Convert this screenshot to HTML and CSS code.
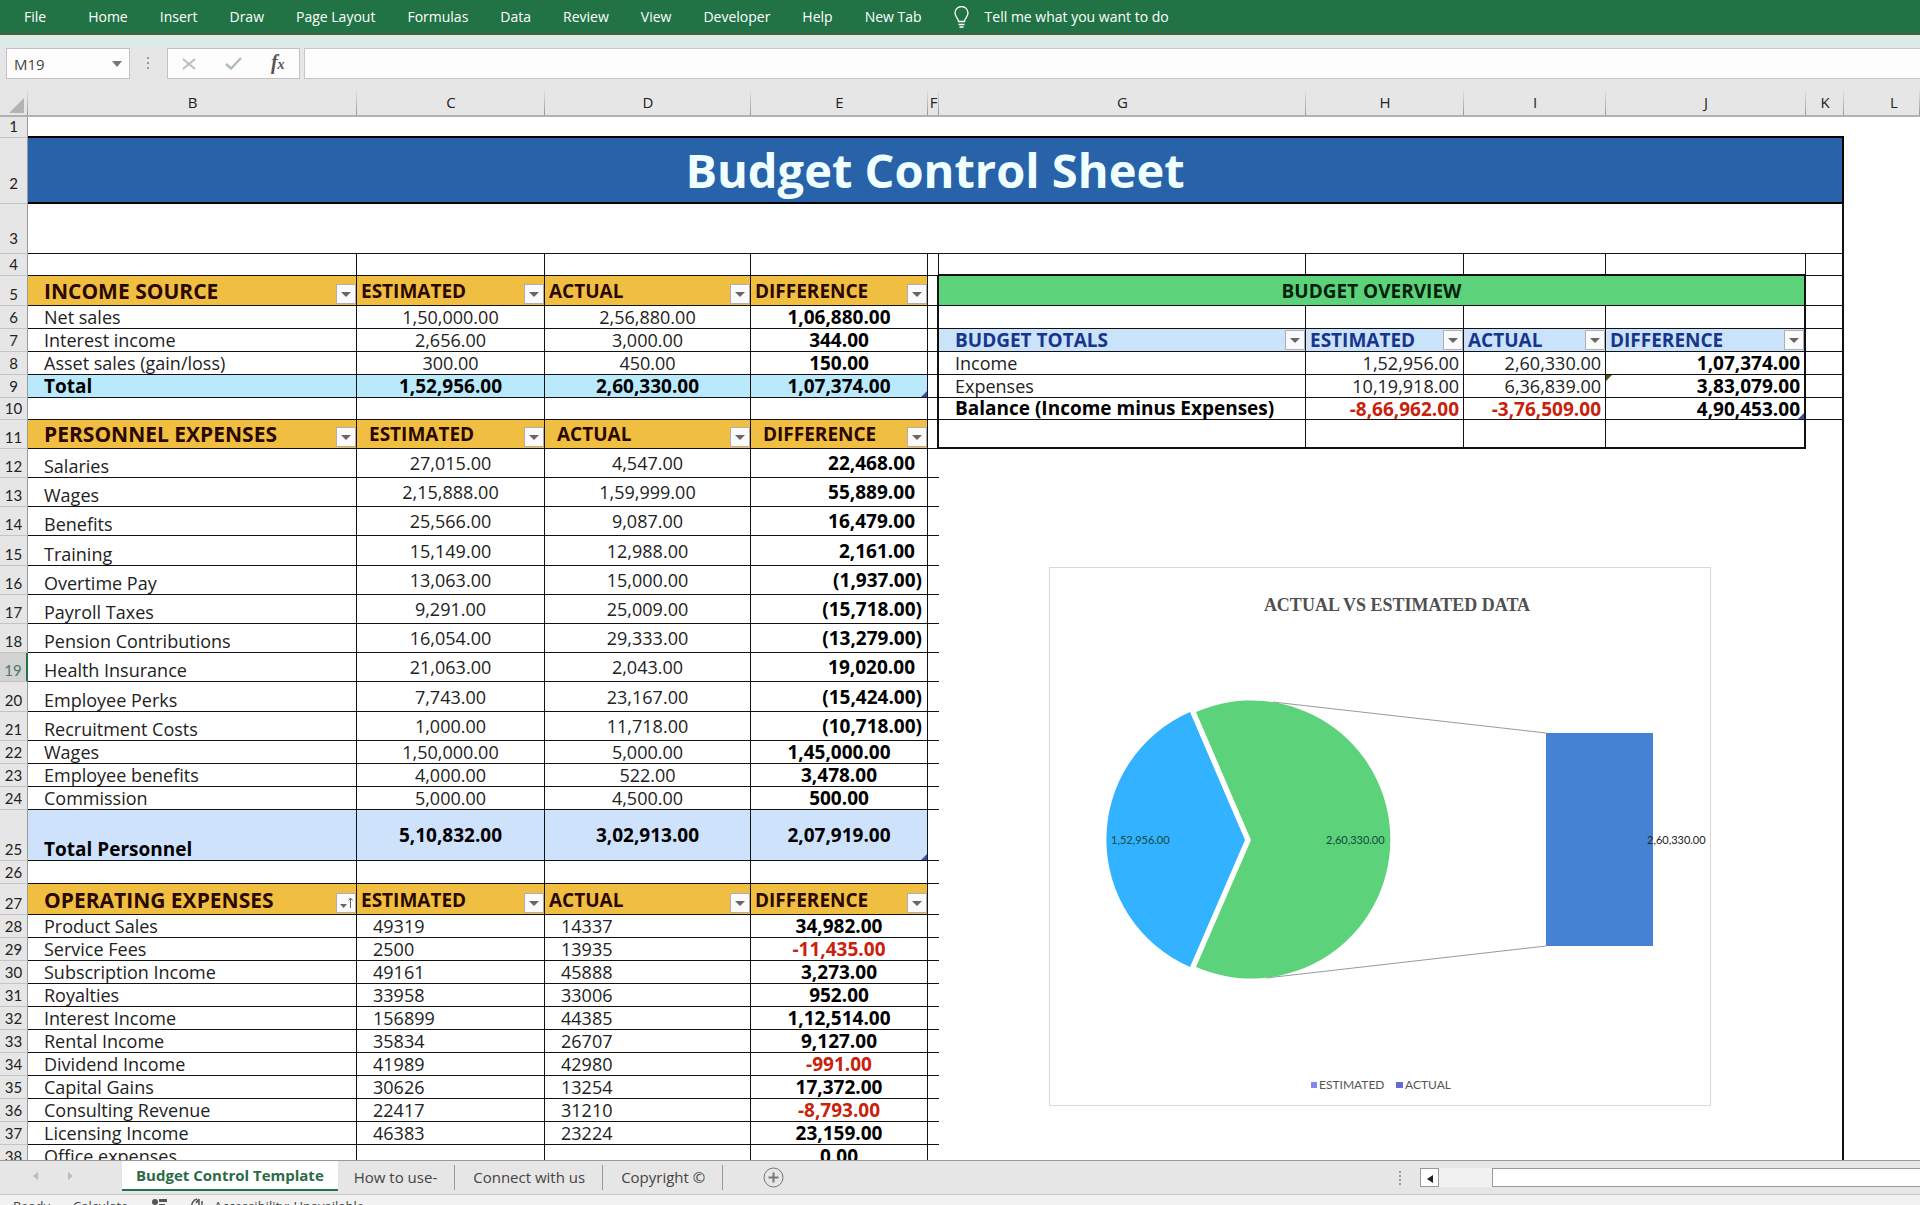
FILE: index.html
```html
<!DOCTYPE html>
<html lang="en">
<head>
<meta charset="utf-8">
<title>Budget Control Sheet</title>
<link rel="stylesheet" href="styles.css">
</head>
<body>
<svg class="defs" aria-hidden="true">
  <symbol id="caret" viewBox="0 0 18 18"><path d="M4 7h10l-5 5z" fill="#666"/></symbol>
  <symbol id="sorted" viewBox="0 0 18 18"><path d="M3 10h7l-3.500 4z" fill="#666"/><path d="M13.500 14V4M11.500 6.500l2-2.500 2 2.500" fill="none" stroke="#666"/></symbol>
</svg>
<nav class="ribbon">
  <button class="ribbon-file">File</button>
  <button>Home</button>
  <button>Insert</button>
  <button>Draw</button>
  <button>Page Layout</button>
  <button>Formulas</button>
  <button>Data</button>
  <button>Review</button>
  <button>View</button>
  <button>Developer</button>
  <button>Help</button>
  <button>New Tab</button>
  <button class="tell"><svg width="15" height="22" viewBox="0 0 15 22" fill="none" stroke="#fff" stroke-width="1.300"><path d="M4.500 15.500c0-3-3.500-4.500-3.500-8.500a6.500 6.500 0 0 1 13 0c0 4-3.500 5.500-3.500 8.500zM4.500 18.500h6M5.500 21h4"/></svg>Tell me what you want to do</button>
</nav>
<div class="formula-bar">
  <div class="name-box">
    <input type="text" value="M19" aria-label="Name box">
    <svg width="10" height="6" viewBox="0 0 10 6"><path d="M0 0h10L5 6z" fill="#777"/></svg>
  </div>
  <svg class="grip" width="3" height="14" viewBox="0 0 3 14" fill="#999"><path d="M0 0h2v2H0zM0 5h2v2H0zM0 10h2v2H0z"/></svg>
  <div class="entry-tools">
    <button aria-label="Cancel"><svg width="14" height="12" viewBox="0 0 14 12"><path d="M1 1l12 10M13 1L1 11" stroke="#bbb" stroke-width="2"/></svg></button>
    <button aria-label="Enter"><svg width="17" height="13" viewBox="0 0 17 13"><path d="M1 7l5 4.500L16 1" fill="none" stroke="#b5bdb8" stroke-width="2.500"/></svg></button>
    <button class="fx" aria-label="Insert function"><i>f</i><small>x</small></button>
  </div>
  <input class="formula" type="text" aria-label="Formula bar">
</div>

<main class="sheet">
<table class="grid">
<colgroup><col class="c-n"><col class="c-b"><col class="c-c"><col class="c-d"><col class="c-e"><col class="c-f"><col class="c-g"><col class="c-h"><col class="c-i"><col class="c-j"><col class="c-k"><col></colgroup>
<thead>
<tr><th class="corner"><svg width="15" height="15" viewBox="0 0 15 15"><path d="M15 0v15H0z" fill="#b3b3b3"/></svg></th><th>B</th><th>C</th><th>D</th><th>E</th><th>F</th><th>G</th><th>H</th><th>I</th><th>J</th><th>K</th><th class="col-l">L</th></tr>
</thead>
<tbody>
<tr class="h21"><th>1</th><td colspan="10" class="above-title"></td><td class="off" rowspan="38"></td></tr>
<tr class="h66"><th>2</th><td colspan="10" class="title">Budget Control Sheet</td></tr>
<tr class="h50"><th>3</th><td colspan="10" class="line edge"></td></tr>
<tr class="h22"><th>4</th><td class="cell"></td><td class="cell"></td><td class="cell"></td><td class="cell"></td><td class="cell"></td><td class="cell thick-b"></td><td class="cell thick-b"></td><td class="cell thick-b"></td><td class="cell thick-b"></td><td class="line edge"></td></tr>
<tr class="h30 head"><th>5</th><td class="cell big">INCOME SOURCE<button aria-label="Filter"><svg><use href="#caret"/></svg></button></td><td class="cell">ESTIMATED<button aria-label="Filter"><svg><use href="#caret"/></svg></button></td><td class="cell">ACTUAL<button aria-label="Filter"><svg><use href="#caret"/></svg></button></td><td class="cell">DIFFERENCE<button aria-label="Filter"><svg><use href="#caret"/></svg></button></td><td class="gap thick-r"></td><td colspan="4" class="overview">BUDGET OVERVIEW</td><td class="line edge"></td></tr>
<tr class="h23"><th>6</th><td class="cell label">Net sales</td><td class="cell num">1,50,000.00</td><td class="cell num">2,56,880.00</td><td class="cell num b">1,06,880.00</td><td class="gap thick-r"></td><td class="cell"></td><td class="cell"></td><td class="cell"></td><td class="cell thick-r"></td><td class="line edge"></td></tr>
<tr class="h23"><th>7</th><td class="cell label">Interest income</td><td class="cell num">2,656.00</td><td class="cell num">3,000.00</td><td class="cell num b">344.00</td><td class="gap thick-r"></td><td class="cell totals first">BUDGET TOTALS<button aria-label="Filter"><svg><use href="#caret"/></svg></button></td><td class="cell totals">ESTIMATED<button aria-label="Filter"><svg><use href="#caret"/></svg></button></td><td class="cell totals">ACTUAL<button aria-label="Filter"><svg><use href="#caret"/></svg></button></td><td class="cell totals thick-r">DIFFERENCE<button aria-label="Filter"><svg><use href="#caret"/></svg></button></td><td class="line edge"></td></tr>
<tr class="h23"><th>8</th><td class="cell label">Asset sales (gain/loss)</td><td class="cell num">300.00</td><td class="cell num">450.00</td><td class="cell num b">150.00</td><td class="gap thick-r"></td><td class="cell label">Income</td><td class="cell right">1,52,956.00</td><td class="cell right">2,60,330.00</td><td class="cell right b thick-r">1,07,374.00</td><td class="line edge"></td></tr>
<tr class="h23"><th>9</th><td class="cell label b sum">Total</td><td class="cell num b sum">1,52,956.00</td><td class="cell num b sum">2,60,330.00</td><td class="cell num b sum table-end">1,07,374.00</td><td class="gap thick-r"></td><td class="cell label">Expenses</td><td class="cell right">10,19,918.00</td><td class="cell right">6,36,839.00</td><td class="cell right b thick-r flagged">3,83,079.00</td><td class="line edge"></td></tr>
<tr class="h22"><th>10</th><td class="cell"></td><td class="cell"></td><td class="cell"></td><td class="cell"></td><td class="gap thick-r"></td><td class="cell label b">Balance (Income minus Expenses)</td><td class="cell right b neg">-8,66,962.00</td><td class="cell right b neg">-3,76,509.00</td><td class="cell right b thick-r table-end">4,90,453.00</td><td class="line edge"></td></tr>
<tr class="h29 head indent"><th>11</th><td class="cell big">PERSONNEL EXPENSES<button aria-label="Filter"><svg><use href="#caret"/></svg></button></td><td class="cell">ESTIMATED<button aria-label="Filter"><svg><use href="#caret"/></svg></button></td><td class="cell">ACTUAL<button aria-label="Filter"><svg><use href="#caret"/></svg></button></td><td class="cell">DIFFERENCE<button aria-label="Filter"><svg><use href="#caret"/></svg></button></td><td class="gap thick-r"></td><td class="cell plain thick-b"></td><td class="cell plain thick-b"></td><td class="cell plain thick-b"></td><td class="cell plain thick-b thick-r"></td><td class="edge"></td></tr>
<tr class="h29"><th>12</th><td class="cell label">Salaries</td><td class="cell num">27,015.00</td><td class="cell num">4,547.00</td><td class="cell acct b">22,468.00</td><td class="gap"></td>
<td colspan="4" rowspan="27" class="canvas">
<figure class="chart">
<svg viewBox="0 0 660 537" role="img" aria-label="Actual vs estimated data">
  <text class="chart-title" x="347" y="43" text-anchor="middle">ACTUAL VS ESTIMATED DATA</text>
  <path d="M223 134L496 165M216 410L496 378" stroke="#999" fill="none"/>
  <path d="M195 272L140 144A139 139 0 0 0 140 399Z" fill="#33b2ff"/>
  <path d="M201 272L146 144A139 139 0 1 1 146 399Z" fill="#5cd27a"/>
  <rect x="496" y="165" width="107" height="213" fill="#4682d3"/>
  <text class="value" x="61" y="276">1,52,956.00</text>
  <text class="value" x="276" y="276">2,60,330.00</text>
  <text class="value dark" x="597" y="276">2,60,330.00</text>
  <rect x="261" y="514" width="6" height="6" fill="#8088f8"/><text class="legend" x="269" y="521">ESTIMATED</text>
  <rect x="346" y="514" width="7" height="6" fill="#646bd6"/><text class="legend" x="355" y="521">ACTUAL</text>
</svg>
</figure>
</td><td rowspan="27" class="edge"></td></tr>
<tr class="h29"><th>13</th><td class="cell label">Wages</td><td class="cell num">2,15,888.00</td><td class="cell num">1,59,999.00</td><td class="cell acct b">55,889.00</td><td class="gap"></td></tr>
<tr class="h29"><th>14</th><td class="cell label">Benefits</td><td class="cell num">25,566.00</td><td class="cell num">9,087.00</td><td class="cell acct b">16,479.00</td><td class="gap"></td></tr>
<tr class="h30"><th>15</th><td class="cell label">Training</td><td class="cell num">15,149.00</td><td class="cell num">12,988.00</td><td class="cell acct b">2,161.00</td><td class="gap"></td></tr>
<tr class="h29"><th>16</th><td class="cell label">Overtime Pay</td><td class="cell num">13,063.00</td><td class="cell num">15,000.00</td><td class="cell acct paren b">(1,937.00)</td><td class="gap"></td></tr>
<tr class="h29"><th>17</th><td class="cell label">Payroll Taxes</td><td class="cell num">9,291.00</td><td class="cell num">25,009.00</td><td class="cell acct paren b">(15,718.00)</td><td class="gap"></td></tr>
<tr class="h29"><th>18</th><td class="cell label">Pension Contributions</td><td class="cell num">16,054.00</td><td class="cell num">29,333.00</td><td class="cell acct paren b">(13,279.00)</td><td class="gap"></td></tr>
<tr class="h29"><th class="active-row">19</th><td class="cell label">Health Insurance</td><td class="cell num">21,063.00</td><td class="cell num">2,043.00</td><td class="cell acct b">19,020.00</td><td class="gap"></td></tr>
<tr class="h30"><th>20</th><td class="cell label">Employee Perks</td><td class="cell num">7,743.00</td><td class="cell num">23,167.00</td><td class="cell acct paren b">(15,424.00)</td><td class="gap"></td></tr>
<tr class="h29"><th>21</th><td class="cell label">Recruitment Costs</td><td class="cell num">1,000.00</td><td class="cell num">11,718.00</td><td class="cell acct paren b">(10,718.00)</td><td class="gap"></td></tr>
<tr class="h23"><th>22</th><td class="cell label">Wages</td><td class="cell num">1,50,000.00</td><td class="cell num">5,000.00</td><td class="cell num b">1,45,000.00</td><td class="gap"></td></tr>
<tr class="h23"><th>23</th><td class="cell label">Employee benefits</td><td class="cell num">4,000.00</td><td class="cell num">522.00</td><td class="cell num b">3,478.00</td><td class="gap"></td></tr>
<tr class="h23"><th>24</th><td class="cell label">Commission</td><td class="cell num">5,000.00</td><td class="cell num">4,500.00</td><td class="cell num b">500.00</td><td class="gap"></td></tr>
<tr class="h51"><th>25</th><td class="cell label b subtotal">Total Personnel</td><td class="cell num b subtotal">5,10,832.00</td><td class="cell num b subtotal">3,02,913.00</td><td class="cell num b subtotal table-end">2,07,919.00</td><td class="gap"></td></tr>
<tr class="h23"><th>26</th><td class="cell"></td><td class="cell"></td><td class="cell"></td><td class="cell"></td><td class="gap"></td></tr>
<tr class="h31 head"><th>27</th><td class="cell big">OPERATING EXPENSES<button aria-label="Sorted filter"><svg><use href="#sorted"/></svg></button></td><td class="cell">ESTIMATED<button aria-label="Filter"><svg><use href="#caret"/></svg></button></td><td class="cell">ACTUAL<button aria-label="Filter"><svg><use href="#caret"/></svg></button></td><td class="cell">DIFFERENCE<button aria-label="Filter"><svg><use href="#caret"/></svg></button></td><td class="gap"></td></tr>
<tr class="h23"><th>28</th><td class="cell label">Product Sales</td><td class="cell label">49319</td><td class="cell label">14337</td><td class="cell num b">34,982.00</td><td class="gap"></td></tr>
<tr class="h23"><th>29</th><td class="cell label">Service Fees</td><td class="cell label">2500</td><td class="cell label">13935</td><td class="cell num b neg">-11,435.00</td><td class="gap"></td></tr>
<tr class="h23"><th>30</th><td class="cell label">Subscription Income</td><td class="cell label">49161</td><td class="cell label">45888</td><td class="cell num b">3,273.00</td><td class="gap"></td></tr>
<tr class="h23"><th>31</th><td class="cell label">Royalties</td><td class="cell label">33958</td><td class="cell label">33006</td><td class="cell num b">952.00</td><td class="gap"></td></tr>
<tr class="h23"><th>32</th><td class="cell label">Interest Income</td><td class="cell label">156899</td><td class="cell label">44385</td><td class="cell num b">1,12,514.00</td><td class="gap"></td></tr>
<tr class="h23"><th>33</th><td class="cell label">Rental Income</td><td class="cell label">35834</td><td class="cell label">26707</td><td class="cell num b">9,127.00</td><td class="gap"></td></tr>
<tr class="h23"><th>34</th><td class="cell label">Dividend Income</td><td class="cell label">41989</td><td class="cell label">42980</td><td class="cell num b neg">-991.00</td><td class="gap"></td></tr>
<tr class="h23"><th>35</th><td class="cell label">Capital Gains</td><td class="cell label">30626</td><td class="cell label">13254</td><td class="cell num b">17,372.00</td><td class="gap"></td></tr>
<tr class="h23"><th>36</th><td class="cell label">Consulting Revenue</td><td class="cell label">22417</td><td class="cell label">31210</td><td class="cell num b neg">-8,793.00</td><td class="gap"></td></tr>
<tr class="h23"><th>37</th><td class="cell label">Licensing Income</td><td class="cell label">46383</td><td class="cell label">23224</td><td class="cell num b">23,159.00</td><td class="gap"></td></tr>
<tr class="h23"><th>38</th><td class="cell label">Office expenses</td><td class="cell label"></td><td class="cell label"></td><td class="cell num b">0.00</td><td class="gap"></td></tr>
</tbody>
</table>
</main>

<footer class="tab-bar">
  <div class="tab-nav">
    <button aria-label="Previous sheet"><svg width="5" height="8" viewBox="0 0 5 8"><path d="M5 0v8L0 4z" fill="#bbb"/></svg></button>
    <button aria-label="Next sheet"><svg width="5" height="8" viewBox="0 0 5 8"><path d="M0 0v8l5-4z" fill="#bbb"/></svg></button>
  </div>
  <button class="tab active">Budget Control Template</button>
  <button class="tab">How to use-</button>
  <button class="tab">Connect with us</button>
  <button class="tab">Copyright ©</button>
  <button class="add" aria-label="New sheet"><svg width="21" height="21" viewBox="0 0 21 21" fill="none" stroke="#777"><circle cx="10.500" cy="10.500" r="9.500"/><path d="M10.500 5.500v10M5.500 10.500h10" stroke-width="2"/></svg></button>
  <svg class="split" width="3" height="14" viewBox="0 0 3 14" fill="#999"><path d="M0 0h2v2H0zM0 4h2v2H0zM0 8h2v2H0zM0 12h2v2H0z"/></svg>
  <div class="scroll">
    <button aria-label="Scroll left"><svg width="6" height="8" viewBox="0 0 6 8"><path d="M6 0v8L0 4z" fill="#222"/></svg></button>
    <div class="thumb"></div>
  </div>
</footer>
<div class="status">
  <span class="ready">Ready</span><span class="calc">Calculate</span>
  <svg class="macro" width="17" height="14" viewBox="0 0 17 14" fill="#555"><circle cx="4" cy="4" r="3"/><path d="M8 1h8v3H8zM8 6h6v2H8zM1 8h6v6H1z"/></svg>
  <svg class="a11y" width="16" height="16" viewBox="0 0 16 16" fill="none" stroke="#555" stroke-width="1.500"><path d="M7 1C3 2 1 6 2 10M9 1v8M6 5l3-4M12 3v6"/></svg>
  <span>Accessibility: Unavailable</span>
</div>
</body>
</html>
```
FILE: styles.css
```css
* { box-sizing: border-box; }

body {
  margin: 0;
  height: 100vh;
  display: flex;
  flex-direction: column;
  overflow: hidden;
  background: #fff;
  color: #222;
  font-family: "Open Sans", "Noto Sans", sans-serif;
}

button {
  border: 0;
  padding: 0;
  background: none;
  color: inherit;
  font: inherit;
}

.defs { position: absolute; width: 0; height: 0; }

/* Ribbon */
.ribbon {
  flex: none;
  display: flex;
  height: 35px;
  padding-left: 8px;
  background: #217346;
  border-bottom: 2px solid #4f5f44;
  color: #fff;
  font-size: 14px;
  white-space: nowrap;
}
.ribbon button { padding: 0 16px; }
.ribbon .ribbon-file { padding-right: 26px; }
.ribbon .tell { display: flex; align-items: center; gap: 16px; padding-left: 16px; }

/* Formula bar */
.formula-bar {
  flex: none;
  display: flex;
  align-items: stretch;
  height: 44px;
  padding: 13px 0 0 6px;
  background: linear-gradient(#dcebe5 12px, #e6e6e6 12px);
}
.name-box {
  display: flex;
  align-items: center;
  width: 124px;
  height: 31px;
  padding: 0 7px;
  background: #fdfdfd;
  border: 1px solid #c6c0c2;
}
.name-box input {
  flex: 1;
  min-width: 0;
  border: 0;
  padding: 0;
  background: none;
  color: #444;
  font: inherit;
  font-size: 15px;
}
.grip { margin: 9px 17px 0 17px; }
.entry-tools {
  display: flex;
  align-items: center;
  justify-content: space-around;
  width: 133px;
  height: 31px;
  margin-right: 4px;
  background: #fdfdfd;
  border: 1px solid #c6c0c2;
}
.fx { color: #555; font-family: "Liberation Serif", serif; font-size: 20px; font-weight: bold; line-height: 20px; }
.fx small { font-size: 14px; font-style: italic; }
.formula {
  flex: 1;
  height: 31px;
  background: #fdfdfd;
  border: 1px solid #c6c6c6;
  border-right: 0;
}

/* Grid */
.sheet { flex: 1; min-height: 0; overflow: hidden; }
.grid {
  width: 100%;
  table-layout: fixed;
  border-collapse: separate;
  border-spacing: 0;
  font-size: 18px;
  line-height: 20px;
  white-space: nowrap;
}
.c-n { width: 28px; }
.c-b { width: 329px; }
.c-c { width: 188px; }
.c-d { width: 206px; }
.c-e { width: 177px; }
.c-f { width: 11px; }
.c-g { width: 367px; }
.c-h { width: 158px; }
.c-i { width: 142px; }
.c-j { width: 200px; }
.c-k { width: 38px; }

.grid td, .grid th { padding: 0; position: relative; }
.grid thead th {
  height: 38px;
  padding-top: 10px;
  background: linear-gradient(#e6e6e6, #999) right bottom / 1px 26px no-repeat #e6e6e6;
  border-bottom: 2px solid #b0b0b0;
  font-size: 15px;
  font-weight: normal;
  line-height: 24px;
}
.grid thead .corner { text-align: right; padding: 16px 4px 0 0; line-height: 0; }
.grid thead .col-l { padding-left: 24px; }
.grid tbody th {
  padding-bottom: 2px;
  background: #e6e6e6;
  border-right: 1px solid #9b9b9b;
  border-bottom: 1px solid #c4c4c4;
  font-family: Lato, sans-serif;
  font-size: 15px;
  font-weight: normal;
  line-height: 18px;
  text-align: center;
  vertical-align: bottom;
}
.grid .h66 th { padding-bottom: 11px; }
.grid .h50 th { padding-bottom: 6px; }
.grid tbody .active-row { background: #d2d2d2; border-right: 2px solid #217346; color: #4f7a62; }

.h21 { height: 21px; }
.h22 { height: 22px; }
.h23 { height: 23px; }
.h29 { height: 29px; }
.h30 { height: 30px; }
.h31 { height: 31px; }
.h50 { height: 50px; }
.h51 { height: 51px; }
.h66 { height: 66px; }

.cell { border-right: 1px solid #111; border-bottom: 1px solid #111; }
.gap, .line { border-bottom: 1px solid #111; }
.edge { border-right: 2px solid #111; }
.grid .thick-r { border-right: 2px solid #111; }
.grid .thick-b { border-bottom: 2px solid #111; }
.above-title { border-bottom: 2px solid #000; }

.title {
  background: #2862a9;
  border-right: 2px solid #000;
  border-bottom: 2px solid #000;
  color: #f0ffff;
  font-size: 47px;
  font-weight: bold;
  line-height: 60px;
  text-align: center;
}

.b { font-size: 19px; font-weight: bold; color: #000; }
.neg { color: #c8210c; }
.grid .label { padding: 0 0 1px 16px; vertical-align: bottom; }
.num { text-align: center; }
.grid .right { padding-right: 4px; text-align: right; }
.grid .acct { padding-right: 12px; text-align: right; }
.grid .paren { padding-right: 5px; }

.head .cell {
  padding: 0 0 4px 4px;
  background: #f0bf42;
  color: #2a0800;
  font-size: 19px;
  font-weight: bold;
  vertical-align: bottom;
}
.head .cell.big { padding-left: 16px; font-size: 21px; }
.indent .cell:not(.big) { padding-left: 12px; }
.head .cell.plain { background: none; }
.head .overview {
  background: #5cd27a;
  border-right: 2px solid #111;
  border-bottom: 1px solid #111;
  color: #04210c;
  font-size: 19px;
  font-weight: bold;
  text-align: center;
}
.grid .totals { padding-left: 4px; background: #cbe2fb; color: #17358a; font-size: 19px; font-weight: bold; }
.grid .first { padding-left: 16px; }
.sum { background: #bae9fb; }
.subtotal { background: #cfe2fb; }

.cell button {
  position: absolute;
  right: 0;
  bottom: 1px;
  width: 20px;
  height: 20px;
  background: #fafafa;
  border: 1px solid #b5adb5;
}
.cell button svg { display: block; width: 18px; height: 18px; }

.table-end::after, .flagged::after {
  content: "";
  position: absolute;
  right: 0;
  bottom: 0;
  border: 3px solid;
  border-color: transparent #3f4fa0 #3f4fa0 transparent;
}
.flagged::after { inset: 0 auto auto 0; border-color: #3f6010 transparent transparent #3f6010; }

/* Chart */
.canvas { vertical-align: top; }
.chart {
  width: 662px;
  margin: 118px 0 0 110px;
  border: 1px solid #d9d9d9;
  background: #fff;
}
.chart svg { display: block; width: 100%; }
.chart-title { fill: #505050; font: bold 18px "Liberation Serif", serif; }
.value { fill: #0d4a40; font: 11px Lato, sans-serif; }
.dark { fill: #222; }
.legend { fill: #555; font: 12px Lato, sans-serif; }

/* Sheet tabs */
.tab-bar {
  flex: none;
  display: flex;
  align-items: flex-start;
  height: 35px;
  background: #e6e6e6;
  border-top: 1px solid #999;
  border-bottom: 1px solid #c6c6c6;
  color: #444;
  font-size: 15px;
  white-space: nowrap;
}
.tab-nav { display: flex; gap: 30px; width: 122px; padding: 3px 0 0 33px; }
.tab { position: relative; height: 32px; padding: 0 18px; }
.tab:not(.active)::after { content: ""; position: absolute; top: 4px; right: 0; width: 1px; height: 25px; background: #999; }
.tab.active {
  height: 30px;
  padding: 0 14px;
  margin-right: -2px;
  background: #fff;
  border-bottom: 2px solid #217346;
  color: #2d6a48;
  font-weight: bold;
}
.add { margin: 6px auto 0 40px; height: 21px; }
.add svg { display: block; }
.split { margin: 10px 18px 0 0; }
.scroll { display: flex; justify-content: space-between; width: 500px; margin-top: 7px; background: #f1f1f1; }
.scroll button { width: 19px; height: 19px; background: #fff; border: 1px solid #999; line-height: 10px; }
.thumb { width: 428px; height: 19px; background: #fff; border: 1px solid #999; border-right: 0; }

/* Status bar */
.status {
  flex: none;
  display: flex;
  height: 10px;
  padding: 3px 0 0 13px;
  overflow: hidden;
  background: #f2f2f2;
  color: #444;
  font-size: 13px;
  line-height: 16px;
}
.ready { width: 60px; }
.calc { width: 78px; }
.macro { flex: none; margin-right: 22px; }
.a11y { flex: none; margin-right: 8px; }
```
